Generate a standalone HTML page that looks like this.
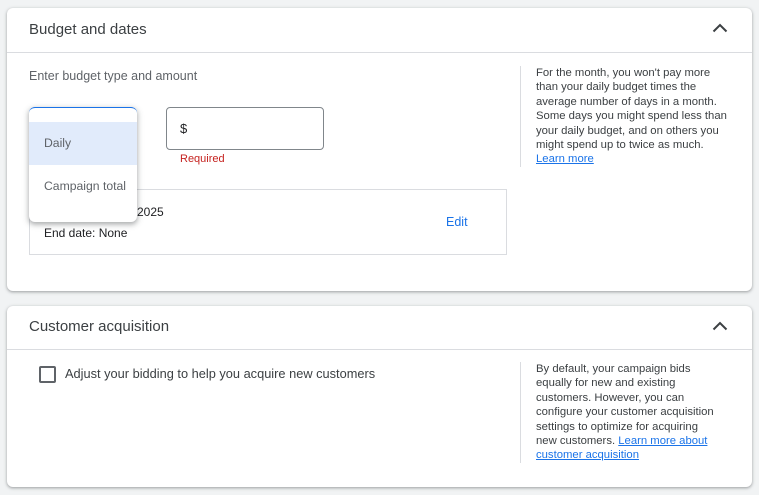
<!DOCTYPE html>
<html><head><style>
body{margin:0;width:759px;height:495px;background:#f1f3f4;font-family:"Liberation Sans",sans-serif;position:relative;overflow:hidden}
.card{position:absolute;left:7px;width:745px;background:#fff;border-radius:6px;box-shadow:0 1px 2px rgba(60,64,67,.3),0 1px 3px 1px rgba(60,64,67,.15)}
.hd{position:absolute;left:22px;font-size:15px;color:#3c4043}
.line{position:absolute;left:0;right:0;height:1px;background:#dadce0}
.chev{position:absolute;right:24px}
.side{position:absolute;left:513px;border-left:1px solid #dadce0;padding-left:15px;font-size:11.3px;line-height:14.4px;color:#3c4043;width:200px;white-space:nowrap}
.side a{color:#1a73e8;text-decoration:underline}
.abs{position:absolute}
</style></head><body>
<div class="card" style="top:8px;height:283px">
  <div class="hd" style="top:13px">Budget and dates</div>
  <svg class="chev" style="top:15px" width="16" height="10" viewBox="0 0 16 10"><path d="M1.5 8.5 L8 2 L14.5 8.5" fill="none" stroke="#3c4043" stroke-width="2"/></svg>
  <div class="line" style="top:44px"></div>
  <div class="abs" style="left:22px;top:61px;font-size:12.5px;color:#5f6368">Enter budget type and amount</div>
  <div class="abs" style="left:159px;top:99px;width:156px;height:41px;border:1px solid #80868b;border-radius:4px"></div>
  <div class="abs" style="left:173px;top:113px;font-size:13px;color:#202124">$</div>
  <div class="abs" style="left:173px;top:145px;font-size:11px;color:#c5221f">Required</div>
  <div class="abs" style="left:22px;top:181px;width:476px;height:64px;border:1px solid #dadce0"></div>
  <div class="abs" style="left:130px;top:197px;font-size:12px;color:#202124">2025</div>
  <div class="abs" style="left:37px;top:218px;font-size:12px;color:#202124">End date: None</div>
  <div class="abs" style="left:439px;top:207px;font-size:12.5px;color:#1a73e8">Edit</div>
  <div class="abs" style="left:22px;top:99px;width:108px;height:114px;background:#fff;border-radius:6px;box-shadow:0 2px 4px rgba(60,64,67,.3),0 2px 6px 2px rgba(60,64,67,.15);border-top:1px solid #1a73e8">
    <div style="position:absolute;top:14px;left:0;right:0;height:43px;background:#e1ebfb"></div>
    <div style="position:absolute;top:28px;left:15px;font-size:12.2px;color:#5f6368">Daily</div>
    <div style="position:absolute;top:71px;left:15px;font-size:12.2px;color:#5f6368">Campaign total</div>
  </div>
  <div class="side" style="top:58px">For the month, you won't pay more<br>than your daily budget times the<br>average number of days in a month.<br>Some days you might spend less than<br>your daily budget, and on others you<br>might spend up to twice as much.<br><a>Learn more</a></div>
</div>
<div class="card" style="top:306px;height:181px">
  <div class="hd" style="top:12px">Customer acquisition</div>
  <svg class="chev" style="top:15px" width="16" height="10" viewBox="0 0 16 10"><path d="M1.5 8.5 L8 2 L14.5 8.5" fill="none" stroke="#3c4043" stroke-width="2"/></svg>
  <div class="line" style="top:43px"></div>
  <div class="abs" style="left:32px;top:60px;width:13px;height:13px;border:2px solid #5f6368;border-radius:2px"></div>
  <div class="abs" style="left:58px;top:60px;font-size:12.8px;color:#3c4043">Adjust your bidding to help you acquire new customers</div>
  <div class="side" style="top:56px">By default, your campaign bids<br>equally for new and existing<br>customers. However, you can<br>configure your customer acquisition<br>settings to optimize for acquiring<br>new customers. <a>Learn more about</a><br><a>customer acquisition</a></div>
</div>
</body></html>
